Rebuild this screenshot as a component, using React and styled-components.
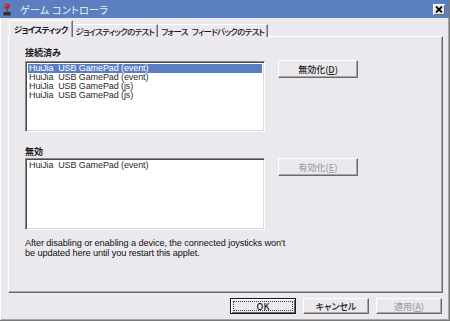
import React from 'react';
import styled, { createGlobalStyle } from 'styled-components';

const GlobalStyle = createGlobalStyle`
  html, body {
    margin: 0;
    padding: 0;
    background: #ebe9ed;
  }
  body {
    font-family: "Liberation Sans", "Noto Sans CJK JP", sans-serif;
  }
`;

const jp = `"Noto Sans CJK JP", "Liberation Sans", sans-serif`;

const Window = styled.div`
  width: 450px;
  height: 321px;
  box-sizing: border-box;
  display: flex;
  flex-direction: column;
  background: #ebe9ed;
  border-right: 1px solid #7a7a7a;
  border-bottom: 1px solid #7a7a7a;
  box-shadow: inset 1px 1px 0 #ffffff, inset -1px -1px 0 #a8a6aa;
  overflow: hidden;
`;

const TitleBar = styled.div`
  height: 18px;
  flex: none;
  display: flex;
  align-items: center;
  background: #5b7fbe;
  padding: 0 4px 0 3px;
`;

const TitleText = styled.span`
  flex: 1;
  margin-left: 9px;
  font-family: ${jp};
  font-feature-settings: "palt";
  font-size: 10px;
  color: #eef0f6;
  letter-spacing: 0.3px;
`;

const CloseButton = styled.div`
  width: 12px;
  height: 11px;
  background: #e8e6ea;
  box-shadow: inset 1px 1px 0 #ffffff, inset -1px -1px 0 #6a6a6a;
  display: flex;
  align-items: center;
  justify-content: center;
  margin-top: 1px;
`;

const Body = styled.div`
  flex: 1;
  display: flex;
  flex-direction: column;
  padding: 2px 6px 0 8px;
`;

const TabRow = styled.div`
  display: flex;
  align-items: flex-end;
  height: 17px;
  padding-left: 1px;
  position: relative;
  z-index: 1;
  margin-bottom: -1px;
`;

const Tab = styled.div`
  height: ${p => (p.$active ? 17 : 13)}px;
  box-sizing: border-box;
  padding: 0 ${p => (p.$active ? 4 : 3)}px;
  display: flex;
  align-items: center;
  font-family: ${jp};
  font-feature-settings: "palt";
  font-size: 8.5px;
  letter-spacing: -0.75px;
  font-weight: ${p => (p.$active ? 700 : 500)};
  color: #1a1a1a;
  background: #ebe9ed;
  border-top: 1px solid #ffffff;
  border-left: ${p => (p.$first ? '1px solid #ffffff' : 'none')};
  border-right: 1px solid #6e6e6e;
  box-shadow: inset -1px 0 0 #a9a7ab;
  white-space: pre;
`;

const TabGap = styled.span`
  display: inline-block;
  width: 4px;
`;

const Panel = styled.div`
  width: 435px;
  height: 257px;
  box-sizing: border-box;
  border-top: 1px solid #ffffff;
  border-left: 1px solid #ffffff;
  border-right: 1px solid #6e6e6e;
  border-bottom: 1px solid #6e6e6e;
  box-shadow: inset -1px -1px 0 #a9a7ab;
  padding: 9px 0 0 16px;
  display: flex;
  flex-direction: column;
`;

const Label = styled.div`
  font-family: ${jp};
  font-size: 9px;
  font-weight: 700;
  color: #1a1a1a;
  height: 13px;
  line-height: 13px;
  margin-top: ${p => p.$top || 0}px;
`;

const Row = styled.div`
  display: flex;
  align-items: flex-start;
  gap: 13px;
  margin-top: ${p => p.$top || 0}px;
`;

const ListBox = styled.div`
  width: 240px;
  height: ${p => p.$h}px;
  box-sizing: border-box;
  background: #ffffff;
  border-top: 1px solid #8a888c;
  border-left: 1px solid #8a888c;
  border-right: 1px solid #ffffff;
  border-bottom: 1px solid #ffffff;
  box-shadow: inset 1px 1px 0 #4a4a4a, inset -1px -1px 0 #dcdadd;
  padding: 2px 2px;
`;

const ListItem = styled.div`
  height: 9px;
  line-height: 9px;
  font-size: 9px;
  letter-spacing: -0.1px;
  color: ${p => (p.$selected ? '#ffffff' : '#2a2a2a')};
  background: ${p => (p.$selected ? '#5a7fc0' : 'transparent')};
  padding-left: 1px;
  white-space: pre;
  overflow: hidden;
`;

const Button = styled.div`
  width: ${p => p.$w || 80}px;
  height: ${p => p.$h || 18}px;
  box-sizing: border-box;
  display: flex;
  align-items: center;
  justify-content: center;
  font-family: ${jp};
  font-feature-settings: "palt";
  font-size: 9px;
  font-weight: 500;
  color: ${p => (p.$disabled ? '#a3a1a5' : '#1a1a1a')};
  background: #ebe9ed;
  border-top: 1px solid #ffffff;
  border-left: 1px solid #ffffff;
  border-right: 1px solid #6a6a6a;
  border-bottom: 1px solid #6a6a6a;
  box-shadow: inset -1px -1px 0 #a9a7ab;
  margin-top: ${p => p.$top || 0}px;
  white-space: nowrap;
`;

const DefaultButton = styled(Button)`
  border: 1px solid #1a1a1a;
  box-shadow: inset 1px 1px 0 #ffffff, inset -1px -1px 0 #6a6a6a;
  position: relative;
  &::after {
    content: '';
    position: absolute;
    left: 2px;
    top: 2px;
    right: 2px;
    bottom: 2px;
    border: 1px dotted #444;
  }
`;

const Key = styled.u`
  text-underline-offset: 1px;
`;

const Note = styled.p`
  margin: 8px 0 0;
  font-size: 9.2px;
  line-height: 10px;
  letter-spacing: -0.1px;
  color: #111111;
`;

const Footer = styled.div`
  display: flex;
  justify-content: flex-end;
  gap: 7px;
  padding: 5px 1px 0 0;
`;

function JoystickIcon() {
  return (
    <svg width="8" height="13" viewBox="0 0 8 13">
      <rect x="0.5" y="9" width="7" height="3.5" fill="#3a2a2a" />
      <rect x="3.3" y="4" width="1.4" height="5.5" fill="#5a4a4a" />
      <circle cx="4" cy="3.2" r="2.6" fill="#c0202a" />
      <circle cx="3.2" cy="2.4" r="0.8" fill="#f08080" />
    </svg>
  );
}

function CloseIcon() {
  return (
    <svg width="8" height="7" viewBox="0 0 8 7">
      <path d="M1 0.5 L7 6.5 M7 0.5 L1 6.5" stroke="#000" strokeWidth="1.8" />
    </svg>
  );
}

const connected = [
  'HuiJia  USB GamePad (event)',
  'HuiJia  USB GamePad (event)',
  'HuiJia  USB GamePad (js)',
  'HuiJia  USB GamePad (js)',
];

export default function App() {
  return (
    <>
      <GlobalStyle />
      <Window>
        <TitleBar>
          <JoystickIcon />
          <TitleText>ゲーム コントローラ</TitleText>
          <CloseButton>
            <CloseIcon />
          </CloseButton>
        </TitleBar>
        <Body>
          <TabRow>
            <Tab $active $first>ジョイスティック</Tab>
            <Tab>ジョイスティックのテスト</Tab>
            <Tab>フォース<TabGap />フィードバックのテスト</Tab>
          </TabRow>
          <Panel>
            <Label>接続済み</Label>
            <Row $top={2}>
              <ListBox $h={71}>
                {connected.map((name, i) => (
                  <ListItem key={i} $selected={i === 0}>{name}</ListItem>
                ))}
              </ListBox>
              <Button $top={-1}>
                無効化(<Key>D</Key>)
              </Button>
            </Row>
            <Label $top={13}>無効</Label>
            <Row $top={0}>
              <ListBox $h={72}>
                <ListItem>HuiJia  USB GamePad (event)</ListItem>
              </ListBox>
              <Button $disabled>
                有効化(<Key>E</Key>)
              </Button>
            </Row>
            <Note>
              After disabling or enabling a device, the connected joysticks won't
              <br />
              be updated here until you restart this applet.
            </Note>
          </Panel>
          <Footer>
            <DefaultButton $w={66} $h={16}>OK</DefaultButton>
            <Button $w={66} $h={16}>キャンセル</Button>
            <Button $w={66} $h={16} $disabled>
              適用(<Key>A</Key>)
            </Button>
          </Footer>
        </Body>
      </Window>
    </>
  );
}
